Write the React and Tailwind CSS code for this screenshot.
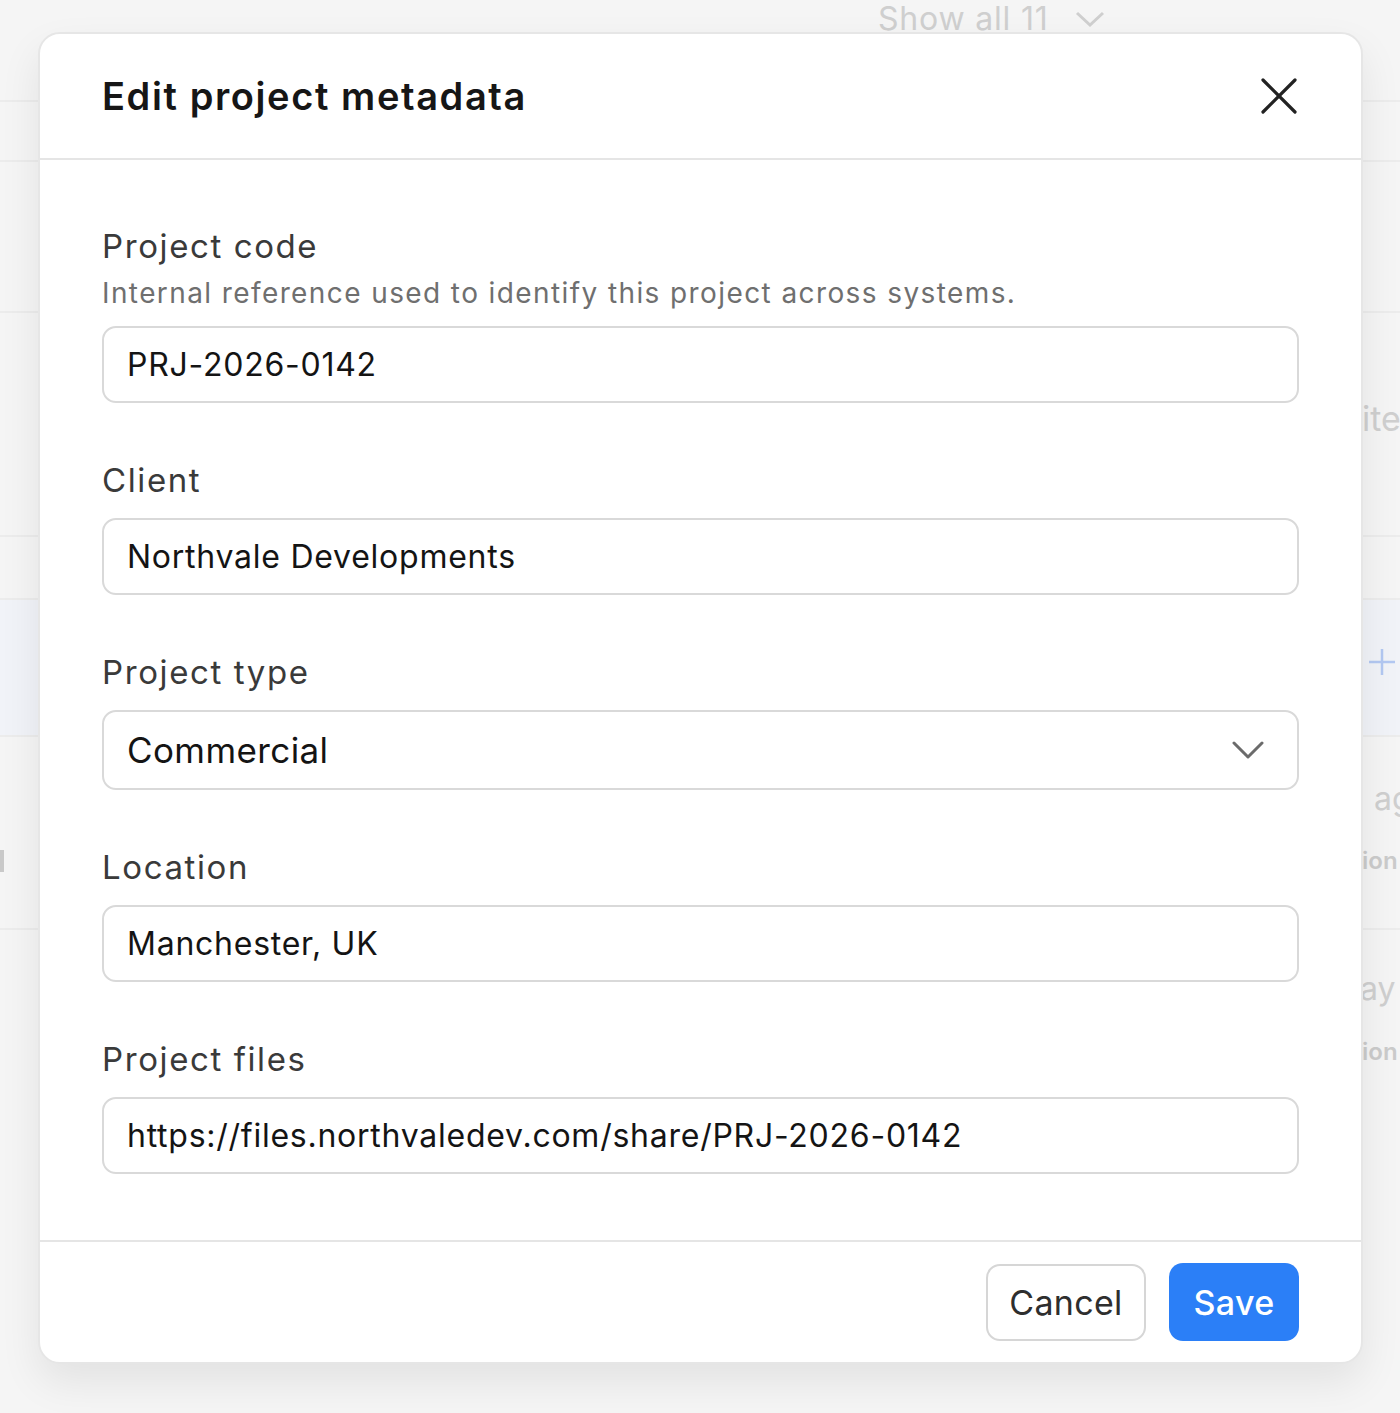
const fields = [
  { label: 'Client', value: 'Northvale Developments' },
];

function Field({ label, hint, children }) {
  return (
    <div className="flex flex-col">
      <label className="text-[33px] leading-[40px] tracking-[1.6px] text-[#3a3a3a]">{label}</label>
      {hint && <p className="mt-[9px] text-[28px] leading-[36px] tracking-[1.4px] text-[#6f6f6f]">{hint}</p>}
      <div className={hint ? 'mt-[15px]' : 'mt-[18px]'}>{children}</div>
    </div>
  );
}

function TextInput({ value }) {
  return (
    <div className="h-[77px] flex items-center rounded-[14px] border-2 border-[#d9d9d9] bg-white pl-[23px] pr-6 text-[32px] tracking-[0.75px] text-[#141414] whitespace-nowrap">
      {value}
    </div>
  );
}

export default function App() {
  return (
    <div
      className="relative h-[1413px] w-[1400px] overflow-hidden bg-[#f5f5f5]"
      style={{ fontFamily: 'Inter, "Liberation Sans", sans-serif' }}
    >
      {/* faded page behind the dialog */}
      <div className="flex flex-col text-[#cfcfcf] whitespace-nowrap">
        <div className="h-[102px] border-b-2 border-[#ececec] pl-[878px] flex items-start">
          <span className="text-[32px] leading-[38px] tracking-[0.8px] flex items-center gap-[26px]">
            Show all 11
            <svg width="30" height="18" viewBox="0 0 30 18" fill="none" stroke="#cfcfcf" strokeWidth="3">
              <polyline points="2,3 15,15 28,3" />
            </svg>
          </span>
        </div>
        <div className="h-[60px] border-b-2 border-[#ececec]" />
        <div className="h-[151px] border-b-2 border-[#ececec]" />
        <div className="h-[224px] border-b-2 border-[#ececec] pl-[1362px] pt-[86px]">
          <span className="text-[34px] leading-[40px]">ite</span>
        </div>
        <div className="h-[63px] border-b-2 border-[#ececec]" />
        <div className="h-[137px] border-b-2 border-[#ececec] bg-[#f1f3f8] pl-[1368px] pt-[48px]">
          <svg width="28" height="28" viewBox="0 0 28 28" fill="none" stroke="#b3c8f2" strokeWidth="2.5">
            <line x1="14" y1="1" x2="14" y2="27" />
            <line x1="1" y1="14" x2="27" y2="14" />
          </svg>
        </div>
        <div className="h-[193px] border-b-2 border-[#ececec] flex flex-col pt-[44px]">
          <span className="pl-[1374px] text-[32px] leading-[36px]">ag</span>
          <div className="flex items-center mt-[30px]">
            <span className="w-[4px] h-[22px] bg-[#c9c9c9]" />
            <span className="ml-[1358px] text-[24px] leading-[28px] font-semibold text-[#cbcbcb]">ion</span>
          </div>
        </div>
        <div className="flex flex-col pt-[40px]">
          <span className="pl-[1360px] text-[32px] leading-[38px]">ay</span>
          <span className="pl-[1362px] mt-[30px] text-[24px] leading-[28px] font-semibold text-[#cbcbcb]">ion</span>
        </div>
      </div>

      {/* dialog */}
      <div className="absolute left-[38px] top-[32px] w-[1325px] h-[1332px] flex flex-col rounded-[22px] border-2 border-[#e6e6e6] bg-white shadow-[0_18px_40px_rgba(0,0,0,0.08)]">
        <div className="h-[126px] shrink-0 flex items-center justify-between border-b-2 border-[#e5e5e5] pl-[62px] pr-[64px]">
          <h2 className="text-[38px] font-semibold tracking-[1.6px] text-[#161616]">Edit project metadata</h2>
          <svg width="36" height="36" viewBox="0 0 36 36" fill="none" stroke="#222" strokeWidth="3.2" strokeLinecap="round">
            <line x1="2" y1="2" x2="34" y2="34" />
            <line x1="34" y1="2" x2="2" y2="34" />
          </svg>
        </div>

        <div className="flex-1 flex flex-col gap-[57px] pt-[66px] pl-[62px] pr-[62px]">
          <Field label="Project code" hint="Internal reference used to identify this project across systems.">
            <TextInput value="PRJ-2026-0142" />
          </Field>
          {fields.map((f) => (
            <Field key={f.label} label={f.label}>
              <TextInput value={f.value} />
            </Field>
          ))}
          <Field label="Project type">
            <div className="h-[80px] flex items-center justify-between rounded-[14px] border-2 border-[#d9d9d9] bg-white pl-[23px] pr-[33px] text-[35px] tracking-[0.4px] text-[#141414]">
              Commercial
              <svg width="32" height="18" viewBox="0 0 32 18" fill="none" stroke="#6b6b6b" strokeWidth="3" strokeLinecap="round" strokeLinejoin="round">
                <polyline points="2,2 16,16 30,2" />
              </svg>
            </div>
          </Field>
          <Field label="Location">
            <TextInput value="Manchester, UK" />
          </Field>
          <Field label="Project files">
            <TextInput value="https://files.northvaledev.com/share/PRJ-2026-0142" />
          </Field>
        </div>

        <div className="h-[122px] shrink-0 flex items-center justify-end gap-[23px] border-t-2 border-[#e5e5e5] pr-[62px]">
          <button className="h-[77px] w-[160px] rounded-[14px] border-2 border-[#d6d6d6] bg-white text-[34px] tracking-[0.3px] text-[#2e2e2e]">
            Cancel
          </button>
          <button className="h-[78px] w-[130px] rounded-[14px] bg-[#2b7ff7] text-[34px] font-medium tracking-[0.3px] text-white">
            Save
          </button>
        </div>
      </div>
    </div>
  );
}
